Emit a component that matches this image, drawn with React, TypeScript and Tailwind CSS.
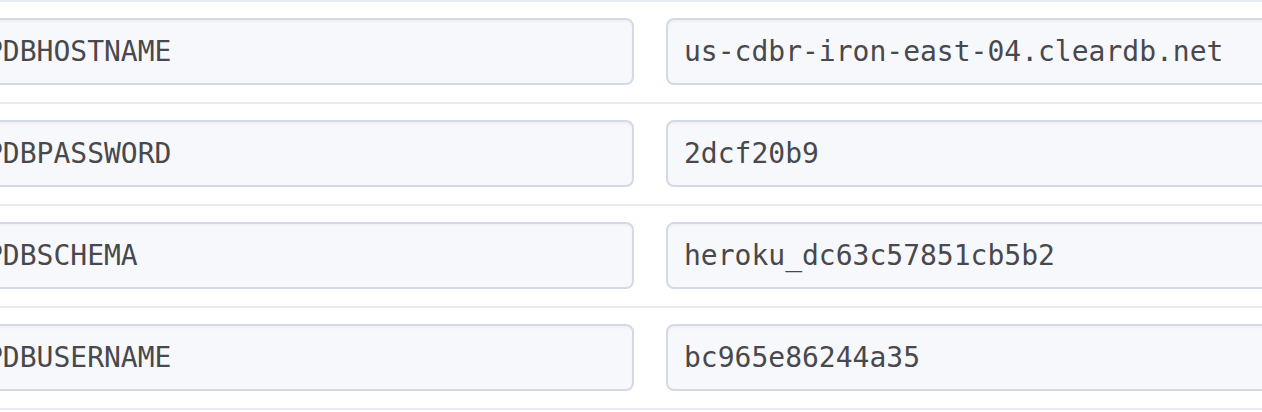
import React from "react";

const rows = [
  ["PDBHOSTNAME", "us-cdbr-iron-east-04.cleardb.net"],
  ["PDBPASSWORD", "2dcf20b9"],
  ["PDBSCHEMA", "heroku_dc63c57851cb5b2"],
  ["PDBUSERNAME", "bc965e86244a35"],
];

const mono = { fontFamily: '"DejaVu Sans Mono", monospace' };

export default function App() {
  return (
    <div className="w-[1262px] h-[412px] overflow-hidden bg-white">
      <div className="h-[2px] bg-[#e8ebf0]" />
      {rows.map(([k, v]) => (
        <div key={k}>
          <div className="flex gap-[32px] pt-[16px] pb-[17px] ml-[-37px]">
            <div
              className="shrink-0 w-[671px] h-[67px] flex items-center pl-[21px] rounded-[8px] border-2 border-[#d3dae6] bg-[#f7f8fb] shadow-[inset_0_2px_2px_rgba(0,0,0,0.03)] text-[28px] text-[#48484d] whitespace-nowrap overflow-hidden"
              style={mono}
            >
              {k}
            </div>
            <div
              className="shrink-0 w-[700px] h-[67px] flex items-center pl-[16px] rounded-[8px] border-2 border-[#d3dae6] bg-[#f7f8fb] shadow-[inset_0_2px_2px_rgba(0,0,0,0.03)] text-[28px] text-[#48484d] whitespace-nowrap overflow-hidden"
              style={mono}
            >
              {v}
            </div>
          </div>
          <div className="h-[2px] bg-[#e8ebf0]" />
        </div>
      ))}
    </div>
  );
}
